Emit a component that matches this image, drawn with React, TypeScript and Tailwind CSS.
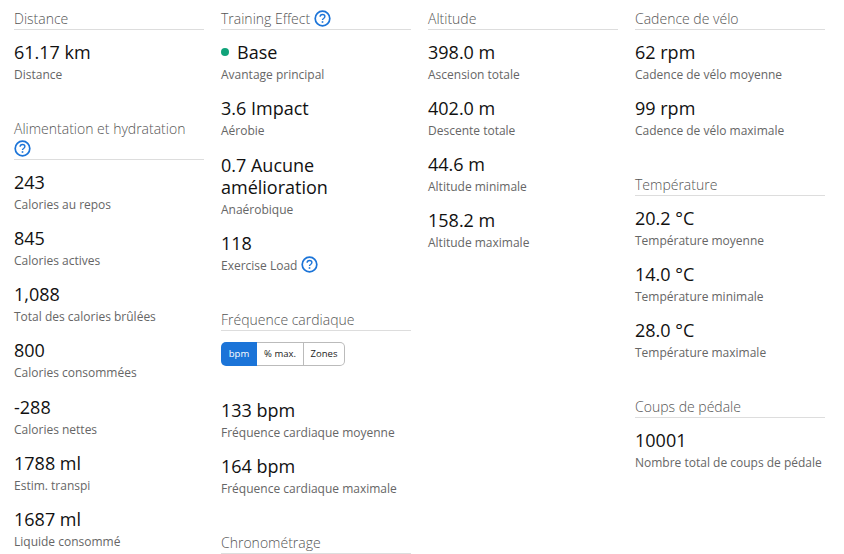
const font = { fontFamily: '"Open Sans", sans-serif' };

function HelpIcon() {
    return (
        <svg width="17" height="17" viewBox="0 0 17 17" className="inline-block align-[1px] -my-1">
            <circle cx="8.5" cy="8.5" r="7.3" fill="none" stroke="#1b74d8" strokeWidth="1.7" />
            <path d="M6.1 6.7c0-1.4 1-2.2 2.4-2.2s2.4.8 2.4 2c0 1-.6 1.5-1.3 2-.7.4-1.1.8-1.1 1.6" fill="none" stroke="#1b74d8" strokeWidth="1.4" />
            <rect x="7.7" y="11.2" width="1.6" height="1.6" fill="#1b74d8" />
        </svg>
    )
}

function Section({ title, help, children }: { title: string, help?: boolean, children: React.ReactNode }) {
    return (
        <div className="pb-[23px]">
            <h3 className="text-[14px] font-light leading-[20px] text-[#555] border-b border-[#ddd] mb-[10px]">
                {title} {help && <HelpIcon />}
            </h3>
            {children}
        </div>
    )
}

function Stat({ value, label, help }: { value: React.ReactNode, label: string, help?: boolean }) {
    return (
        <div className="mb-[14.1px]">
            <div className="text-[18px] leading-[22px] text-[#111] pt-[1px] pb-[1px]">{value}</div>
            <div className="text-[12px] leading-[16px] text-[#666] mt-[3px] -mb-[1px]">{label} {help && <HelpIcon />}</div>
        </div>
    )
}

export default function App() {
    return (
        <div style={font} className="h-[554px] w-[844px] overflow-hidden bg-white pt-[9px] pl-[14px] flex gap-[17px]">
            <div className="w-[190px]">
                <div className="pb-[0.05px]">
                    <Section title="Distance">
                        <Stat value="61.17 km" label="Distance" />
                    </Section>
                </div>
                <Section title="Alimentation et hydratation" help>
                    <Stat value="243" label="Calories au repos" />
                    <Stat value="845" label="Calories actives" />
                    <Stat value="1,088" label="Total des calories brûlées" />
                    <Stat value="800" label="Calories consommées" />
                    <Stat value="-288" label="Calories nettes" />
                    <Stat value="1788 ml" label="Estim. transpi" />
                    <Stat value="1687 ml" label="Liquide consommé" />
                </Section>
            </div>
            <div className="w-[190px]">
                <Section title="Training Effect" help>
                    <Stat
                        value={
                            <span className="flex items-center">
                                <span className="w-2 h-2 rounded-full bg-[#10a37a] mr-2"></span>
                                Base
                            </span>
                        }
                        label="Avantage principal"
                    />
                    <Stat value="3.6 Impact" label="Aérobie" />
                    <div className="pt-[1px]">
                        <Stat value="0.7 Aucune amélioration" label="Anaérobique" />
                    </div>
                    <Stat value="118" label="Exercise Load" help />
                </Section>
                <Section title="Fréquence cardiaque">
                    <div className="pt-[1px] mb-[32px]">
                        <div className="flex w-fit h-[24px] text-[9.5px] font-medium">
                            <span className="bg-[#1b74d8] text-white rounded-l-[5px] w-[36px] flex items-center justify-center">bpm</span>
                            <span className="border-y border-r border-[#bbb] text-[#222] w-[47px] flex items-center justify-center">% max.</span>
                            <span className="border-y border-r border-[#bbb] text-[#222] rounded-r-[5px] w-[41px] flex items-center justify-center">Zones</span>
                        </div>
                    </div>
                    <div className="-mb-[2px]">
                        <Stat value="133 bpm" label="Fréquence cardiaque moyenne" />
                        <Stat value="164 bpm" label="Fréquence cardiaque maximale" />
                    </div>
                </Section>
                <Section title="Chronométrage">
                    <span></span>
                </Section>
            </div>
            <div className="w-[190px]">
                <Section title="Altitude">
                    <Stat value="398.0 m" label="Ascension totale" />
                    <Stat value="402.0 m" label="Descente totale" />
                    <Stat value="44.6 m" label="Altitude minimale" />
                    <Stat value="158.2 m" label="Altitude maximale" />
                </Section>
            </div>
            <div className="w-[190px]">
                <Section title="Cadence de vélo">
                    <Stat value="62 rpm" label="Cadence de vélo moyenne" />
                    <Stat value="99 rpm" label="Cadence de vélo maximale" />
                </Section>
                <Section title="Température">
                    <Stat value="20.2 °C" label="Température moyenne" />
                    <Stat value="14.0 °C" label="Température minimale" />
                    <Stat value="28.0 °C" label="Température maximale" />
                </Section>
                <Section title="Coups de pédale">
                    <Stat value="10001" label="Nombre total de coups de pédale" />
                </Section>
            </div>
        </div>
    )
}
